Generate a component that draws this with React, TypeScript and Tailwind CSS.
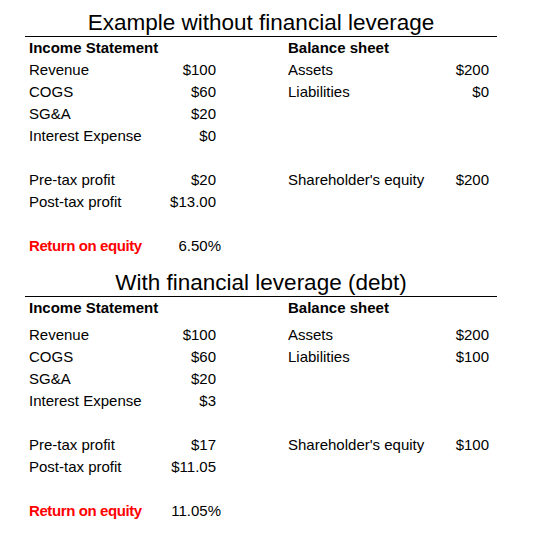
import React from 'react';

type Row = { label: string; value: string } | null;

interface SectionProps {
  title: string;
  titleHeight: string;
  headerGap: boolean;
  income: Row[];
  balance: Row[];
  roe: string;
}

const LineRow: React.FC<{ row: Row; valueWidth: string }> = ({ row, valueWidth }) => (
  <div className="h-[22px] flex items-center whitespace-nowrap">
    {row && (
      <>
        <span className="flex-1">{row.label}</span>
        <span className={`${valueWidth} text-right`}>{row.value}</span>
      </>
    )}
  </div>
);

const Section: React.FC<SectionProps> = ({ title, titleHeight, headerGap, income, balance, roe }) => (
  <div>
    <div className={`${titleHeight} ml-[25px] w-[472px] flex items-end justify-center pb-[2px] text-[22.5px] leading-none whitespace-nowrap`}>
      {title}
    </div>
    <div className="ml-[25px] w-[472px] border-t border-black" />
    <div className="flex pl-[29px]">
      <div className="w-[187px]">
        <div className={`${headerGap ? 'h-[27px] pb-[5px]' : 'h-[22px]'} flex items-center font-bold whitespace-nowrap`}>
          Income Statement
        </div>
        {income.map((r, i) => (
          <LineRow key={i} row={r} valueWidth="w-[80px]" />
        ))}
        <div className="h-[22px]" />
        <div className="h-[22px] flex items-center whitespace-nowrap">
          <span className="flex-1 font-bold text-[#ff0000] tracking-[-0.4px]">Return on equity</span>
          <span className="w-[80px] text-right -mr-[5px]">{roe}</span>
        </div>
      </div>
      <div className="ml-[72px] w-[201px]">
        <div className={`${headerGap ? 'h-[27px] pb-[5px]' : 'h-[22px]'} flex items-center font-bold whitespace-nowrap`}>
          Balance sheet
        </div>
        {balance.map((r, i) => (
          <LineRow key={i} row={r} valueWidth="w-[60px]" />
        ))}
      </div>
    </div>
  </div>
);

export default function App() {
  return (
    <div className="w-[545px] h-[534px] bg-white text-black text-[15px] font-['Century_Gothic','Liberation_Sans',Arial,sans-serif]">
      <Section
        title="Example without financial leverage"
        titleHeight="h-[36px]"
        headerGap={false}
        income={[
          { label: 'Revenue', value: '$100' },
          { label: 'COGS', value: '$60' },
          { label: 'SG&A', value: '$20' },
          { label: 'Interest Expense', value: '$0' },
          null,
          { label: 'Pre-tax profit', value: '$20' },
          { label: 'Post-tax profit', value: '$13.00' },
        ]}
        balance={[
          { label: 'Assets', value: '$200' },
          { label: 'Liabilities', value: '$0' },
          null,
          null,
          null,
          { label: "Shareholder's equity", value: '$200' },
        ]}
        roe="6.50%"
      />
      <Section
        title="With financial leverage (debt)"
        titleHeight="h-[39px]"
        headerGap={true}
        income={[
          { label: 'Revenue', value: '$100' },
          { label: 'COGS', value: '$60' },
          { label: 'SG&A', value: '$20' },
          { label: 'Interest Expense', value: '$3' },
          null,
          { label: 'Pre-tax profit', value: '$17' },
          { label: 'Post-tax profit', value: '$11.05' },
        ]}
        balance={[
          { label: 'Assets', value: '$200' },
          { label: 'Liabilities', value: '$100' },
          null,
          null,
          null,
          { label: "Shareholder's equity", value: '$100' },
        ]}
        roe="11.05%"
      />
    </div>
  );
}
